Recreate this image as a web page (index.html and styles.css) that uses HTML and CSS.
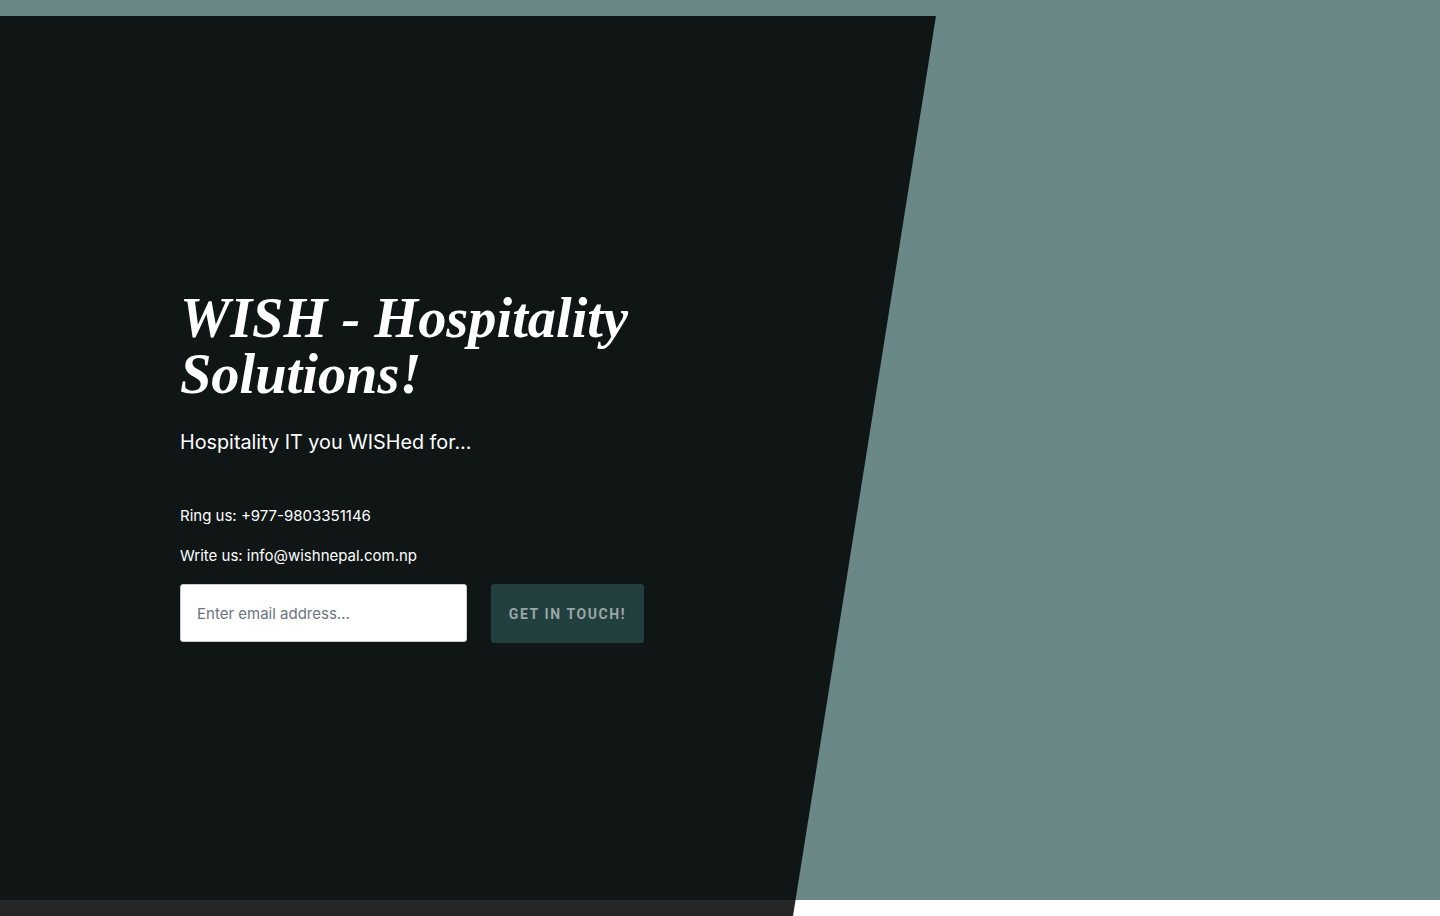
FILE: index.html
```html
<!DOCTYPE html>
<html lang="en">
<head>
<meta charset="utf-8">
<title>WISH - Hospitality Solutions!</title>
<link rel="stylesheet" href="styles.css">
</head>
<body>
<div class="topbar"></div>
<div class="stage">
  <section class="panel">
    <div class="content">
      <h1 class="title">WISH - Hospitality<br>Solutions!</h1>
      <p class="lead">Hospitality IT you WISHed for...</p>
      <p class="contact contact-first">Ring us: +977-9803351146</p>
      <p class="contact">Write us: info@wishnepal.com.np</p>
      <form class="signup">
        <input class="email" type="email" placeholder="Enter email address...">
        <button class="cta" type="button">GET IN TOUCH!</button>
      </form>
    </div>
  </section>
</div>
</body>
</html>
```
FILE: styles.css
```css
html, body {
  margin: 0;
  padding: 0;
}
body {
  background: #6a8887;
  font-family: "Inter", "Open Sans", sans-serif;
  overflow: hidden;
}
.topbar {
  height: 16px;
  background: #6a8887;
}
.stage {
  height: 900px;
  background: linear-gradient(to bottom, #6a8887 884px, #ffffff 884px);
}
.panel {
  width: 936px;
  height: 900px;
  background: linear-gradient(to bottom, #101616 884px, #262626 884px);
  clip-path: polygon(0 0, 100% 0, 793px 100%, 0 100%);
  box-sizing: border-box;
  padding: 274px 0 0 180px;
}
.content {
  width: 520px;
}
.title {
  margin: 0;
  font-family: "Liberation Serif", "Times New Roman", serif;
  font-style: italic;
  font-weight: 700;
  font-size: 56.4px;
  line-height: 56px;
  color: #ffffff;
}
.lead {
  margin: 26px 0 0;
  font-size: 19.8px;
  line-height: 28px;
  color: #ffffff;
}
.contact {
  margin: 0;
  font-size: 15px;
  line-height: 22px;
  color: #ffffff;
}
.contact-first {
  margin-top: 49px;
}
.contact + .contact {
  margin-top: 18px;
}
.signup {
  display: flex;
  gap: 24px;
  margin-top: 17px;
}
.email {
  width: 287px;
  height: 58px;
  box-sizing: border-box;
  border: 1px solid #c7ccd1;
  border-radius: 3px;
  padding: 0 16px;
  font-family: inherit;
  font-size: 15px;
  color: #333;
  background: #fff;
}
.email::placeholder {
  color: #6b7480;
}
.cta {
  width: 153px;
  height: 59px;
  border: none;
  border-radius: 3px;
  background: #213f3f;
  color: #9aa6a5;
  font-family: "Roboto", "Inter", sans-serif;
  font-weight: 700;
  font-size: 14px;
  letter-spacing: 1.6px;
}
```
